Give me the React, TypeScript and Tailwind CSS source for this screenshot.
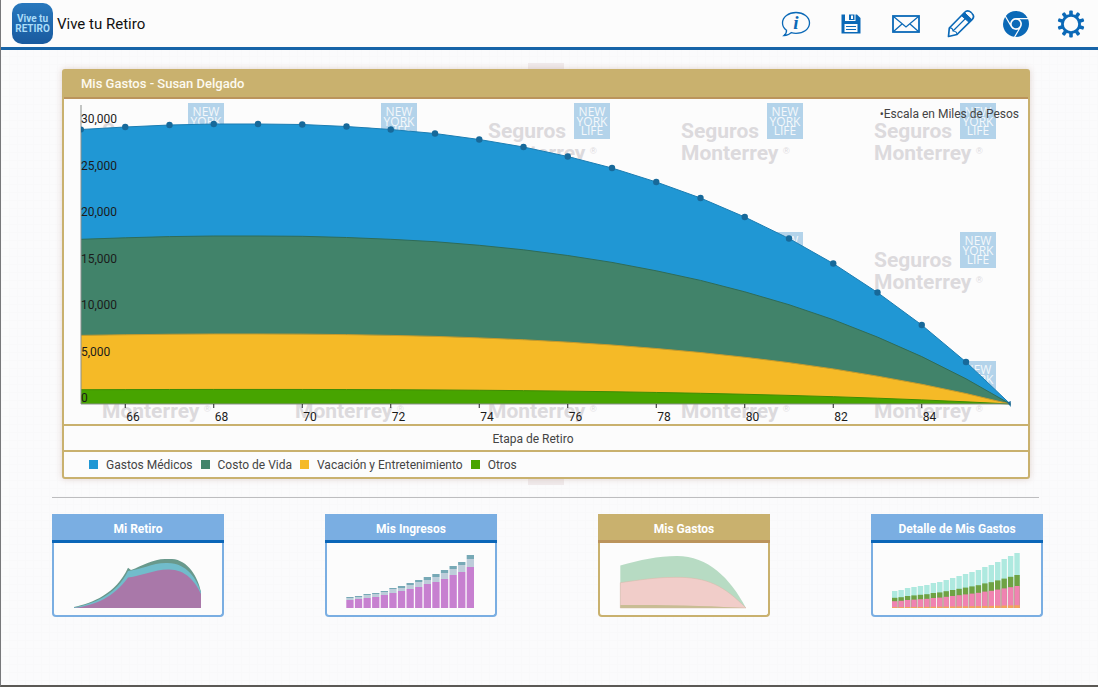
import type { ReactNode } from 'react';

const AXIS_X = 17;
const BASE_Y = 305;
const STEP_X = 44.25;

// Height of the whole stack for each year, starting at 65.
const TOTALS = [
  274.5, 277, 279, 280, 280, 279.5, 277.5, 274.5, 270.5, 264.5, 257, 247.5, 236, 222, 206, 187, 165.5,
  140.5, 111.5, 79, 42, 0,
];

const SERIES = [
  { name: 'Gastos Médicos', share: 1, fill: '#2097d4', stroke: '#1a7db3', swatch: 'bg-[#2097d4]' },
  { name: 'Costo de Vida', share: 0.6, fill: '#41836a', stroke: '#2f6c57', swatch: 'bg-[#41836a]' },
  { name: 'Vacación y Entretenimiento', share: 0.25, fill: '#f5ba27', stroke: '#c69a2c', swatch: 'bg-[#f5ba27]' },
  { name: 'Otros', share: 0.052, fill: '#47a400', stroke: '#3d8c04', swatch: 'bg-[#47a400]' },
];

const Y_LABELS = ['30,000', '25,000', '20,000', '15,000', '10,000', '5,000', '0'];
const X_LABELS = [66, 68, 70, 72, 74, 76, 78, 80, 82, 84];

// Tiles that would lie wholly under the areas are left out.
const WATERMARKS = [
  { y: 4, xs: [38, 231, 424, 617, 810] },
  { y: 133, xs: [617, 810] },
  { y: 262, xs: [38, 231, 424, 617, 810] },
];

const xAt = (i: number) => AXIS_X + i * STEP_X;

function linePoints(share: number) {
  return TOTALS.map((t, i) => `${xAt(i)},${BASE_Y - t * share}`).join(' ');
}

function Watermark({ x, y }: { x: number; y: number }) {
  return (
    <g transform={`translate(${x} ${y})`}>
      <g className="fill-[#dcdadd] text-[21px] font-bold">
        <text x="0" y="35">Seguros</text>
        <text x="0" y="57">Monterrey</text>
      </g>
      <text x="102" y="51" className="fill-[#dcdadd] font-['Liberation_Sans',sans-serif] text-[9px]">®</text>
      <rect x="86" y="0" width="36" height="36" fill="#b3d3ea" />
      <g
        textAnchor="middle"
        className="fill-[#f4f8fb] font-['Open_Sans','Noto_Sans',sans-serif] text-[12px]"
      >
        <text x="104" y="13">NEW</text>
        <text x="104" y="23">YORK</text>
        <text x="104" y="32">LIFE</text>
      </g>
    </g>
  );
}

function ExpensesChart() {
  return (
    <svg viewBox="0 0 964 325" className="block h-auto w-full font-[Roboto,sans-serif]" role="img" aria-label="Mis Gastos">
      {WATERMARKS.map(({ y, xs }) => xs.map((x) => <Watermark key={`${x}-${y}`} x={x} y={y} />))}
      {SERIES.map((s) => (
        <g key={s.name}>
          <polygon points={`${AXIS_X},${BASE_Y} ${linePoints(s.share)}`} fill={s.fill} />
          <polyline points={linePoints(s.share)} fill="none" stroke={s.stroke} strokeWidth="1" />
        </g>
      ))}
      <path d={`M${AXIS_X} 6V${BASE_Y}H${xAt(21)}`} fill="none" stroke="#8a8f8c" strokeWidth="1" />
      {TOTALS.slice(1, 21).map((t, i) => (
        <circle key={i} cx={xAt(i + 1)} cy={BASE_Y - t} r="3.2" fill="#17699a" />
      ))}
      <path d={`M${AXIS_X} 27.5a3 3 0 0 1 0 6z`} fill="#17699a" />
      <path d={`M${xAt(21) - 3} 303.5l3.5-1.5v6z`} fill="#17699a" />
      <g className="fill-[#1b1b1b] text-[12px]">
        {Y_LABELS.map((label, i) => (
          <text key={label} x={AXIS_X} y={24 + i * 46.5}>
            {label}
          </text>
        ))}
        {X_LABELS.map((label, i) => (
          <g key={label}>
            <path d={`M${xAt(i * 2 + 1)} ${BASE_Y}v4`} stroke="#222" strokeWidth="1" />
            <text x={xAt(i * 2 + 1) + 1} y="322">
              {label}
            </text>
          </g>
        ))}
      </g>
      <text x="955" y="19" textAnchor="end" className="fill-[#444] text-[12px]">
        •Escala en Miles de Pesos
      </text>
    </svg>
  );
}

function InfoIcon() {
  return (
    <svg width="30" height="26" viewBox="0 0 30 26" fill="none">
      <path
        d="M5.5 19.2C2.8 17.4 1.5 14.9 1.5 12C1.5 6 7.5 1.5 15 1.5S28.5 6 28.5 12S22.5 22.3 15 22.3C13.2 22.3 11.6 22 10.2 21.6C8.6 23.3 6.2 24.5 3 24.5C4.8 23 5.7 21.2 5.5 19.2Z"
        stroke="#0b69b7"
        strokeWidth="1.3"
      />
      <text
        x="15"
        y="18"
        textAnchor="middle"
        className="fill-[#0b69b7] font-['Liberation_Serif',serif] text-[19px] font-bold italic"
      >
        i
      </text>
    </svg>
  );
}

function SaveIcon() {
  return (
    <svg width="20" height="20" viewBox="0 0 20 20">
      <path
        fill="#0b69b7"
        fillRule="evenodd"
        d="M.5.5H4V7H14.5V.5H16L19.5 4V19.5H.5ZM3.5 10V18H16.5V10ZM8 .5H13.5V6H8ZM10 1.5V5H12V1.5Z"
      />
      <path d="M5 12.5H15M5 15.5H15" stroke="#0b69b7" />
    </svg>
  );
}

function MailIcon() {
  return (
    <svg width="28" height="18" viewBox="0 0 28 18" fill="none" stroke="#0b69b7">
      <rect x="1" y="1" width="26" height="16" strokeWidth="1.8" />
      <path d="M1.5 1.5L14 12L26.5 1.5M1.5 16.5L10 9M26.5 16.5L18 9" strokeWidth="1.3" />
    </svg>
  );
}

function PencilIcon() {
  return (
    <svg width="28" height="28" viewBox="0 0 28 28" fill="none" stroke="#0b69b7" strokeLinejoin="round">
      <path
        d="M1.5 26.5L2.3 18L17.5 2.5C19.5.5 22 .7 24 2.5L25 3.5C27 5.5 27 7.5 25.3 9.3L10 24.5Z"
        strokeWidth="1.7"
      />
      <path d="M2.3 18C4.5 17.6 5.8 18.6 6 21C8.5 21.2 10 22.3 10 24.5M6 21L19 8" strokeWidth="1.2" />
      <path d="M14.5 5.7L22.3 12.5L25 9.8L17.5 2.6Z" fill="#0b69b7" />
      <path d="M19.5 3.8C21 2.3 22.5 2.8 24 4.3" stroke="#fbfbfc" strokeWidth="1.5" />
    </svg>
  );
}

function ChromeIcon() {
  return (
    <svg width="26" height="26" viewBox="0 0 24 24" fill="#0b69b7">
      <path d="M12 0C8.21 0 4.831 1.757 2.632 4.501l3.953 6.848A5.454 5.454 0 0 1 12 6.545h10.691A12 12 0 0 0 12 0z" />
      <path d="M1.931 5.47A11.943 11.943 0 0 0 0 12c0 6.012 4.42 10.991 10.189 11.864l3.953-6.847a5.45 5.45 0 0 1-6.865-2.29z" />
      <path d="M15.273 7.636a5.446 5.446 0 0 1 1.45 7.091l-5.344 9.257c.206.01.413.016.621.016 6.627 0 12-5.373 12-12 0-1.54-.29-3.011-.818-4.364z" />
      <circle cx="12" cy="12" r="4" />
    </svg>
  );
}

function GearIcon() {
  return (
    <svg width="28" height="28" viewBox="0 0 28 28">
      <circle cx="14" cy="14" r="8.6" fill="none" stroke="#0b69b7" strokeWidth="2.8" />
      {[0, 36, 72, 108, 144, 180, 216, 252, 288, 324].map((deg) => (
        <rect key={deg} x="12.2" y=".5" width="3.6" height="5" rx="1" fill="#0b69b7" transform={`rotate(${deg} 14 14)`} />
      ))}
    </svg>
  );
}

const ACTIONS = [
  { label: 'Información', icon: <InfoIcon /> },
  { label: 'Guardar', icon: <SaveIcon /> },
  { label: 'Correo', icon: <MailIcon /> },
  { label: 'Editar', icon: <PencilIcon /> },
  { label: 'Navegador', icon: <ChromeIcon /> },
  { label: 'Ajustes', icon: <GearIcon /> },
];

function Header() {
  return (
    <header className="flex h-[50px] items-center border-b-3 border-[#1764a8] bg-[#fcfcfc] pl-[11px]">
      <div className="flex size-[41px] flex-col items-center justify-center rounded-[10px] bg-linear-to-b from-[#2878bd] to-[#195a9f] text-[10px] leading-[10px] font-bold text-[#a9dcf8]">
        <span>Vive tu</span>
        <span>RETIRO</span>
      </div>
      <h1 className="ml-1 pt-px text-[15px] text-[#111]">Vive tu Retiro</h1>
      <nav className="ml-auto flex">
        {ACTIONS.map((a) => (
          <button key={a.label} type="button" aria-label={a.label} className="flex h-11 w-[55px] items-center justify-center">
            {a.icon}
          </button>
        ))}
      </nav>
    </header>
  );
}

function RetirementThumb() {
  return (
    <>
      <path d="M20 64C38 60 62 51 74 24.7L77 27C88 23 99 16 111 16H118C134 17 144 34 147 49V65H20Z" fill="#69998c" />
      <path d="M20 64.5C38 61 62 53 74 28C86 27 98 20 112 20C132 19 143 36 147 49V65H20Z" fill="#71bccb" />
      <path d="M20 65C42 62 60 54 74 34.5C88 33 100 26.5 114 26.5C131 26 141 38 147 51V65Z" fill="#a978a9" />
    </>
  );
}

// Stack heights: base, middle, top.
const INCOME = [
  [8, 2, 1], [9, 2, 1], [10, 3, 1], [11, 3, 1], [13, 3, 1], [15, 4, 1], [17, 3, 2], [19, 4, 2],
  [21, 5, 2], [24, 4, 3], [26, 5, 3], [29, 6, 3], [33, 6, 3], [36, 7, 3], [41, 8, 4],
];

function IncomeThumb() {
  return (
    <>
      {INCOME.map(([base, mid, top], i) => {
        const x = 19.3 + i * 8.6;
        return (
          <g key={i}>
            <rect x={x} y={65 - base} width="7.3" height={base} fill="#c780d0" />
            <rect x={x} y={65 - base - mid} width="7.3" height={mid} fill="#bdcdda" />
            <rect x={x} y={65 - base - mid - top} width="7.3" height={top} fill="#77a9b6" />
          </g>
        );
      })}
    </>
  );
}

function ExpensesThumb() {
  return (
    <>
      <path d="M20.3 22.5C40 17 58 13 77 13C108 13 130 35 146 65H20.3Z" fill="#b7dbc3" />
      <path d="M20.3 39.7C40 37 55 34.3 75 34.3C108 34 124 43 146 65H20.3Z" fill="#f1cdc9" stroke="#d9b9a9" strokeWidth=".5" />
      <path d="M20.3 62C70 61.5 115 63 146 65H20.3Z" fill="#c9bd94" />
    </>
  );
}

const DETAIL_TOTALS = [17, 18, 20, 21, 22, 23, 25, 26, 28, 30, 32, 34, 36, 38, 41, 43, 46, 49, 52, 55];

function DetailThumb() {
  return (
    <>
      {DETAIL_TOTALS.map((total, i) => {
        const x = 19 + i * 6.44;
        return (
          <g key={i}>
            <rect x={x} y={65 - total} width="5.4" height={total} fill="#aee9df" />
            <rect x={x} y={65 - total * 0.6} width="5.4" height={total * 0.6} fill="#6fa244" />
            <rect x={x} y={65 - total * 0.4} width="5.4" height={total * 0.4} fill="#f083b1" />
            <rect x={x} y={65 - total * 0.05} width="5.4" height={total * 0.05} fill="#f3a45c" />
          </g>
        );
      })}
    </>
  );
}

function ThumbCard({ title, active, children }: { title: string; active?: boolean; children: ReactNode }) {
  return (
    <button type="button" className="w-[172px] text-center">
      <span
        className={
          active
            ? 'block h-[29px] border-b-3 border-[#bb945c] bg-[#c9b16e] text-[12px] leading-[30px] font-bold text-white'
            : 'block h-[29px] border-b-3 border-[#0b66b8] bg-[#7aaee2] text-[12px] leading-[30px] font-bold text-white'
        }
      >
        {title}
      </span>
      <span
        className={
          active
            ? 'block rounded-b border-2 border-t-0 border-[#c9b16e] bg-[#fcfcfc]'
            : 'block rounded-b border-2 border-t-0 border-[#7aaee2] bg-[#fcfcfc]'
        }
      >
        <svg viewBox="0 0 168 72" className="block w-full" aria-hidden="true">
          {children}
        </svg>
      </span>
    </button>
  );
}

export default function App() {
  return (
    <div className="flex min-h-screen flex-col border-b-2 border-l border-b-[#5b5955] border-l-[#77787a] bg-[#fbfbfc] bg-[linear-gradient(#f9f9fa_1px,transparent_1px),linear-gradient(90deg,#f9f9fa_1px,transparent_1px)] bg-size-[8px_8px] font-[Roboto,sans-serif]">
      <Header />
      <main className="pr-[55px] pl-[51px]">
        <div className="relative isolate mt-[19px] mr-[13px] ml-[10px]">
          <div className="absolute -top-1.5 -bottom-1.5 left-1/2 -z-10 ml-[-18px] w-9 bg-[#f0ebec]" />
          <section className="rounded-[3px] border-2 border-[#c9b16e] bg-[#fcfcfc] shadow-[0_0_6px_rgba(150,90,70,0.25)]">
            <h2 className="h-7 border-b-2 border-[#bb945c] bg-[#c9b16e] pl-[17px] text-[13px] leading-[25px] font-medium text-[#fdfaf0]">
              Mis Gastos - Susan Delgado
            </h2>
            <ExpensesChart />
            <p className="h-7 border-y-2 border-[#c9b16e] pr-[26px] text-center text-[12px] leading-[26px] text-[#444]">
              Etapa de Retiro
            </p>
            <ul className="flex h-[25px] items-center gap-2 pl-[25px] text-[12px] text-[#444]">
              {SERIES.map((s) => (
                <li key={s.name} className="flex items-center gap-2">
                  <span className={`size-[9px] ${s.swatch}`} />
                  {s.name}
                </li>
              ))}
            </ul>
          </section>
        </div>
        <hr className="mt-[18px] mr-1 border-[#bdbdbf]" />
        <div className="mt-4 flex justify-between">
          <ThumbCard title="Mi Retiro">
            <RetirementThumb />
          </ThumbCard>
          <ThumbCard title="Mis Ingresos">
            <IncomeThumb />
          </ThumbCard>
          <ThumbCard title="Mis Gastos" active>
            <ExpensesThumb />
          </ThumbCard>
          <ThumbCard title="Detalle de Mis Gastos">
            <DetailThumb />
          </ThumbCard>
        </div>
      </main>
    </div>
  );
}
